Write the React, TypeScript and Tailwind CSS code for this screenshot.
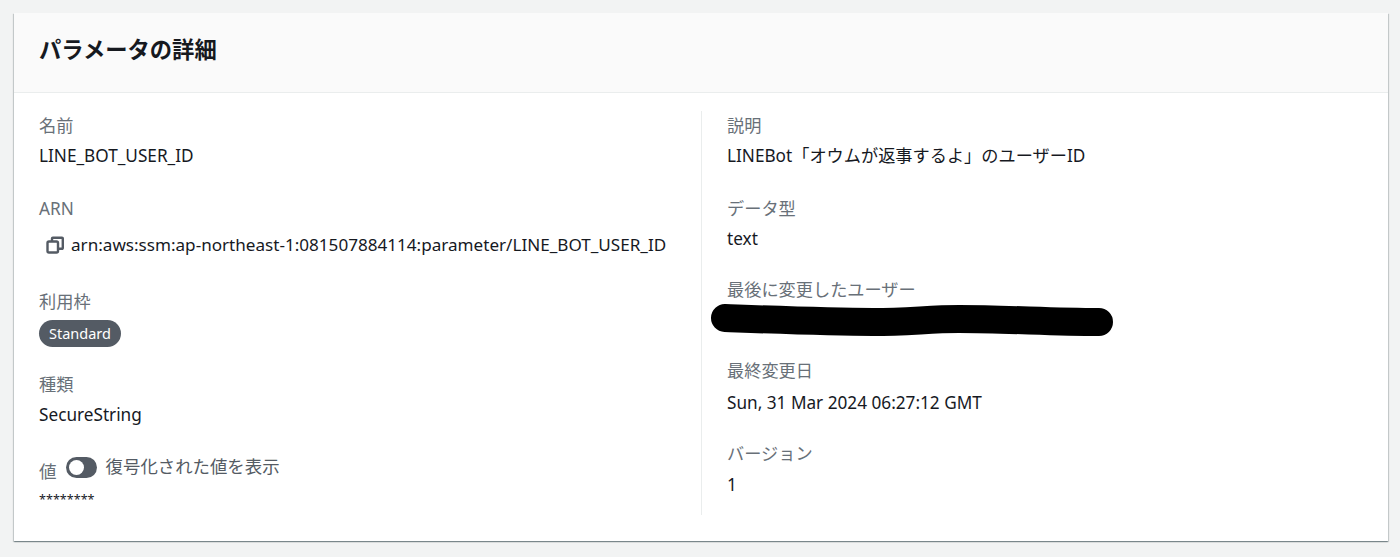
import type { ReactNode } from "react";

function Field({ label, children, className = "" }: { label: string; children: ReactNode; className?: string }) {
  return (
    <div className={className}>
      <div className="h-[30px] leading-[30px] text-[#687078]">{label}</div>
      {children}
    </div>
  );
}

function CopyIcon() {
  return (
    <svg width="18" height="18" viewBox="0 0 18 18" fill="none" stroke="#545b64" strokeWidth="2.4" className="shrink-0">
      <rect x="1.5" y="5.5" width="10.5" height="11" rx="1.5" />
      <path d="M6 5V2.5a.8.8 0 0 1 .8-.8H16a.8.8 0 0 1 .8.8V12a.8.8 0 0 1-.8.8H12.5" />
    </svg>
  );
}

export default function App() {
  return (
    <div className="h-[557px] bg-[#f2f3f3] pt-[13px] pl-[14px] pr-[12px] font-['Noto_Sans','Noto_Sans_CJK_JP',sans-serif] text-[17.2px] text-[#16191f]">
      <div className="h-[528px] bg-white shadow-[0_1px_1px_0_rgba(0,28,36,0.3),1px_1px_1px_0_rgba(0,28,36,0.15),-1px_1px_1px_0_rgba(0,28,36,0.15)]">
        <div className="h-[80px] border-b border-[#eaeded] bg-[#fafafa] pl-[25px] pt-[20px]">
          <h2 className="text-[22.3px] leading-[34px] font-bold">パラメータの詳細</h2>
        </div>
        <div className="flex pt-[18px]">
          <div className="w-[687px] pl-[25px]">
            <Field label="名前">
              <div className="h-[30px] leading-[30px]">LINE_BOT_USER_ID</div>
            </Field>
            <Field label="ARN" className="mt-[23px]">
              <div className="mt-[6px] flex h-[30px] items-center gap-[7px] pl-[7px]">
                <CopyIcon />
                <span className="text-[17.1px]">arn:aws:ssm:ap-northeast-1:081507884114:parameter/LINE_BOT_USER_ID</span>
              </div>
            </Field>
            <Field label="利用枠" className="mt-[27px]">
              <span className="mt-[3px] flex h-[27px] w-[82px] items-center justify-center rounded-full bg-[#545b64] text-[14.5px] text-white">
                Standard
              </span>
            </Field>
            <Field label="種類" className="mt-[23px]">
              <div className="h-[30px] leading-[30px]">SecureString</div>
            </Field>
            <div className="mt-[21px] flex h-[35px] items-start">
              <span className="mt-[5px] h-[30px] leading-[30px] text-[#687078] text-[17.6px]">値</span>
              <span className="ml-[9px] mt-[6px] flex h-[21px] w-[31px] items-center rounded-full bg-[#545b64] pl-[3px]">
                <span className="h-[15px] w-[15px] rounded-full bg-white" />
              </span>
              <span className="ml-[9px] h-[30px] text-[17.4px] leading-[30px] text-[#545b64]">復号化された値を表示</span>
            </div>
            <div className="h-[26px] text-[12.6px] leading-[28px]">********</div>
          </div>
          <div className="h-[404px] w-[26px] border-l border-[#eaeded]" />
          <div className="flex-1">
            <Field label="説明">
              <div className="h-[30px] leading-[30px]">LINEBot「オウムが返事するよ」のユーザーID</div>
            </Field>
            <Field label="データ型" className="mt-[23px]">
              <div className="h-[30px] leading-[30px]">text</div>
            </Field>
            <Field label="最後に変更したユーザー" className="mt-[21px]">
              <div className="relative h-[30px]">
                <svg className="absolute left-[-18px] top-[-1px]" width="410" height="34" viewBox="0 0 410 34">
                  <path d="M16 14 C70 16 120 18 164 18 C200 18 220 15 250 15 C300 15 340 18 390 18" fill="none" stroke="#000" strokeWidth="28" strokeLinecap="round" />
                </svg>
              </div>
            </Field>
            <Field label="最終変更日" className="mt-[21px]">
              <div className="mt-[2px] h-[30px] leading-[30px]">Sun, 31 Mar 2024 06:27:12 GMT</div>
            </Field>
            <Field label="バージョン" className="mt-[21px]">
              <div className="mt-[1px] h-[30px] leading-[30px]">1</div>
            </Field>
          </div>
        </div>
      </div>
    </div>
  );
}
